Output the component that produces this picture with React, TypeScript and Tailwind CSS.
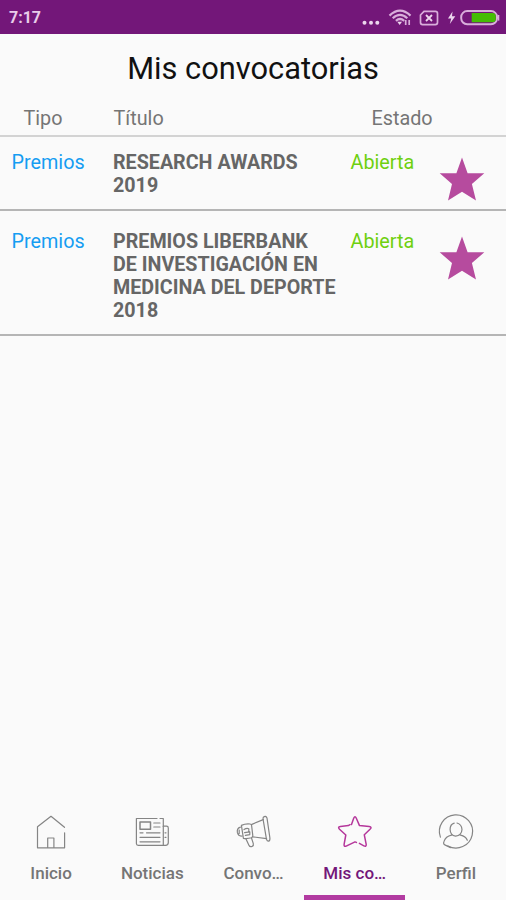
import React from 'react';

interface Convocatoria {
  id: number;
  tipo: string;
  titulo: string;
  estado: string;
}

interface Tab {
  label: string;
  icon: React.ReactNode;
}

const convocatorias: Convocatoria[] = [
  { id: 1, tipo: 'Premios', titulo: 'RESEARCH AWARDS 2019', estado: 'Abierta' },
  { id: 2, tipo: 'Premios', titulo: 'PREMIOS LIBERBANK DE\u00a0INVESTIGACIÓN EN MEDICINA DEL DEPORTE 2018', estado: 'Abierta' },
];

const iconProps = {
  width: 40,
  height: 40,
  viewBox: '0 0 40 40',
  fill: 'none',
  strokeLinecap: 'round',
  strokeLinejoin: 'round',
  strokeWidth: 1.2,
} as const;

const HomeIcon = () => (
  <svg {...iconProps} stroke="#858585">
    <path d="M33.5 15.3 20 4.3 6.5 14.8V35.8H33.6V20.8" />
    <path d="M16.7 35.5V26H22.9V35.5" />
  </svg>
);

const NewsIcon = () => (
  <svg {...iconProps} stroke="#858585">
    <path d="M25 6.5H4.4V31.5Q4.4 33.3 6.2 33.3H33.5Q36.3 33.3 36.3 30.5V16Q36.3 14.2 34.5 14.2H31.3V6.5H28" />
    <path d="M31.3 14.2V33" />
    <path d="M8 10H18.5V17.2H8Z" strokeWidth={1.5} />
    <path d="M21.8 11H28M21.8 15H28M8 20.8H11M14.5 20.8H28M8 25.3H28M8 29.8H28M33 20.8H34M33 25.3H34" />
  </svg>
);

const MegaphoneIcon = () => (
  <svg {...iconProps} stroke="#858585">
    <path d="M17.3 12.6 29.2 7.6M18.6 24.8 32.6 26.6" />
    <path d="M29.4 5.2Q31.6 3.2 33 6L35.9 26Q36.1 29 34.6 29.2Q33.1 29.3 32.5 27.3L29.2 8Q28.8 6 29.4 5.2Z" />
    <path d="M7.4 13.4Q11.5 11.4 16.2 12Q17.4 12.2 17.6 13.5L18.8 23.6Q18.8 25.3 17.4 25.8Q13.5 27 9.4 26.4Z" />
    <path d="M6.4 15.2Q2.6 16.3 3.4 20.7Q4.6 24.7 8.2 24M5.2 18V21.6" />
    <path d="M10 17.6Q12.5 15.9 14.8 16.7V19.4M10.6 20.6 15.8 19.8V22.6L11.4 23.4" />
    <path d="M11.9 26.8 14.9 33.2Q15.8 35.2 18 34.5Q19.9 33.4 19.3 31.6L17.5 26" />
  </svg>
);

const StarOutlineIcon = () => (
  <svg {...iconProps} stroke="#b5379b" strokeWidth={1.5}>
    <path d="M16.5 12.6 18.8 6Q20 3.5 21.2 6L24.5 13.6 34.2 14.5Q37.4 15 35 17.3L29.3 22.8 31.2 32.3Q31.4 35.1 28.9 33.8L24.4 31.4M21.4 30.4 20 29.9 11.2 34.1Q8.8 35 9.1 32.3L10.8 23 4.5 17.2Q2.3 14.8 5.4 14.4L13.4 13.6 15 12.7" />
  </svg>
);

const ProfileIcon = () => (
  <svg {...iconProps} stroke="#858585">
    <path d="M4.4 25.1A16.6 16.6 0 1 1 11.9 33.9" />
    <path d="M18.2 11.1Q14.1 12.2 14.1 17.5 14.3 23.4 19.6 24.2 25.6 23.6 26 17.5 25.6 12.2 21 11" />
    <path d="M15.5 23.2Q9.7 24.5 8 29.4 6.8 32.2 9.3 33.1L14.6 35.6" />
    <path d="M24.5 23.2Q29.8 24.2 31.3 28.3" />
  </svg>
);

const tabs: Tab[] = [
  { label: 'Inicio', icon: <HomeIcon /> },
  { label: 'Noticias', icon: <NewsIcon /> },
  { label: 'Convo…', icon: <MegaphoneIcon /> },
  { label: 'Mis co…', icon: <StarOutlineIcon /> },
  { label: 'Perfil', icon: <ProfileIcon /> },
];

const StatusBar = () => (
  <div className="flex h-[34px] shrink-0 items-center justify-between bg-[#731779] pl-[9px] pr-[6px] text-[#e8cce9]">
    <span className="pt-0.5 text-base font-bold leading-5">7:17</span>
    <svg width="140" height="34" viewBox="360 0 140 34" fill="none" stroke="#d9aedb">
      {/* Notification dots */}
      <g fill="#ecd6ed" stroke="none">
        <circle cx="364.5" cy="22.7" r="2" />
        <circle cx="371" cy="22.7" r="2" />
        <circle cx="377.3" cy="22.7" r="2" />
      </g>
      {/* Wifi */}
      <g strokeWidth="2.2">
        <path d="M389.5 15.6Q400 5.8 410.5 15.6" />
        <path d="M392.7 18.2Q400 11.4 407.3 18.2" />
        <path d="M395.9 20.8Q400 17.2 404.2 20.8" />
        <path d="M397.3 21.7H402L399.7 25Z" fill="#ecd6ed" stroke="none" />
        <path d="M405.7 20V25M409.2 20V25" strokeWidth="1.7" />
      </g>
      {/* SIM */}
      <path d="M424 11.4H435.3Q437.5 11.4 437.5 13.4V22.6Q437.5 24.6 435.3 24.6H422.6Q420.5 24.6 420.5 22.6V15Z" strokeWidth="1.7" />
      <path d="M426 15 432 21M432 15 426 21" strokeWidth="1.8" stroke="#ecd6ed" />
      {/* Battery */}
      <path d="M452.5 11.5 448 18.6H451.2L449.8 24 455.3 16.3H452Z" fill="#ecd6ed" stroke="none" />
      <rect x="461.2" y="11.1" width="35.8" height="13.2" rx="6" strokeWidth="2" />
      <path d="M498.6 15V20.6" strokeWidth="1.4" />
      <path d="M471.7 13H492.5Q495.8 13 495.8 16V19.3Q495.8 22.3 492.5 22.3H471.7Z" fill="#45bd05" stroke="none" />
    </svg>
  </div>
);

const App: React.FC = () => {
  const activeTab = 3;

  return (
    <div className="flex h-[900px] w-[506px] flex-col overflow-hidden bg-[#fafafa] font-[Roboto,sans-serif] text-[#757575]">
      <StatusBar />

      <h1 className="h-[67px] pt-4 text-center text-[30.8px] leading-[38px] text-[#111111]">
        Mis convocatorias
      </h1>

      {/* Column headings */}
      <div className="flex h-9 border-b-2 border-[#d3d3d3] pt-1.5 text-[19.8px] leading-6">
        <span className="w-[113px] pl-[23.5px]">Tipo</span>
        <span className="w-[258.5px] pl-[0.5px]">Título</span>
        <span>Estado</span>
      </div>

      {convocatorias.map((item, index) => (
        <div
          key={item.id}
          className={`flex border-b-2 border-[#b5b5b5] text-[19.8px] leading-[23px] ${
            index === 0 ? 'pb-2 pt-[14px]' : 'pb-3 pt-[19px]'
          }`}
        >
          <span className="w-[113px] pl-[11.5px] text-[#159df2]">{item.tipo}</span>
          <span className="w-[237.5px] pr-2.5 text-[19.7px] font-bold text-[#666666]">{item.titulo}</span>
          <span className="w-[88.5px] text-[#6fd00f]">{item.estado}</span>
          <svg width="46" height="44" viewBox="0 -0.5 46 44" className="mt-1.5" fill="#b64b9e">
            <path d="M23 0 28.6 15.8H45.3L32.9 26.6 37 43 23 34.2 9 43 13 26.6.7 15.8H17.4Z" />
          </svg>
        </div>
      ))}

      {/* Bottom navigation */}
      <nav className="mt-auto flex h-[92px]">
        {tabs.map((tab, index) => (
          <button
            key={tab.label}
            className={`flex flex-1 flex-col items-center border-b-[5px] pl-px pt-1 text-[17px] font-medium leading-5 ${
              index === activeTab ? 'border-[#b23ba1] text-[#731779]' : 'border-transparent'
            }`}
          >
            {tab.icon}
            <span className="mt-[11px]">{tab.label}</span>
          </button>
        ))}
      </nav>
    </div>
  );
};

export default App;
